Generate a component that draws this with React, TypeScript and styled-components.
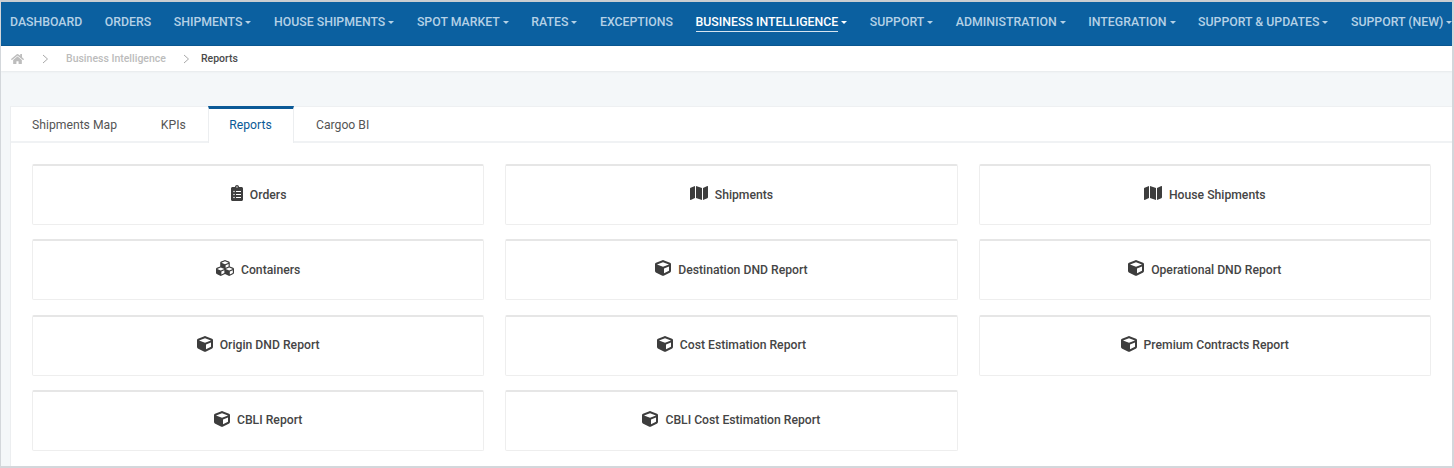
import React from "react";
import styled, { createGlobalStyle } from "styled-components";
import { FaClipboardList, FaMap, FaCubes, FaCube, FaHome } from "react-icons/fa";

const Global = createGlobalStyle`
  html, body { margin: 0; padding: 0; height: 468px; overflow: hidden; background: #f4f7f9; }
  body { font-family: Roboto, "Liberation Sans", sans-serif; }
  * { box-sizing: border-box; }
`;

const Frame = styled.div`
  width: 1454px;
  height: 468px;
  border-top: 2px solid #c9cdd1;
  border-left: 1px solid #d3d7db;
  border-right: 2px solid #d3d7db;
  border-bottom: 2px solid #d3d7db;
  display: flex;
  flex-direction: column;
  overflow: hidden;
  background: #f4f7f9;
`;

const Nav = styled.nav`
  height: 44px;
  background: #0b60a0;
  border-bottom: 1px solid #0a5791;
  display: flex;
  align-items: center;
  padding-left: 9px;
  padding-bottom: 2px;
  gap: 22.6px;
  white-space: nowrap;
  flex: none;
`;

const NavItem = styled.a<{ $active?: boolean }>`
  display: flex;
  align-items: center;
  font-size: 12.3px;
  font-weight: 500;
  color: ${(p) => (p.$active ? "#ffffff" : "#b5d1e6")};
`;

const NavLabel = styled.span<{ $active?: boolean }>`
  padding: 2px 0;
  border-bottom: 1px solid ${(p) => (p.$active ? "#d5e4f0" : "transparent")};
`;

const Caret = styled.i`
  display: inline-block;
  margin-left: 3px;
  margin-bottom: 1px;
  border-top: 3px solid currentColor;
  border-left: 3px solid transparent;
  border-right: 3px solid transparent;
`;

const Crumbs = styled.div`
  height: 25px;
  flex: none;
  background: #ffffff;
  box-shadow: 0 1px 2px rgba(0, 0, 0, 0.06);
  display: flex;
  align-items: center;
  padding-left: 10px;
  font-size: 10.5px;
`;

const HomeIcon = styled(FaHome)`
  width: 13px;
  height: 12px;
  color: #bdbdbd;
`;

const Sep = styled.span<{ $w: number; $pad: number }>`
  width: ${(p) => p.$w}px;
  padding-left: ${(p) => p.$pad}px;
  display: flex;
  justify-content: center;
  color: #a8a8a8;
`;

const CrumbLink = styled.span`
  color: #bcbcbc;
  font-weight: 500;
`;

const CrumbCurrent = styled.span`
  color: #4a4a4a;
  font-weight: 500;
`;

const Main = styled.main`
  flex: 1;
  padding: 35px 0 0 9px;
  display: flex;
  min-height: 0;
`;

const Card = styled.section`
  flex: 1;
  background: #ffffff;
  border-top: 1px solid #eef0f2;
  border-left: 1px solid #eceef0;
  display: flex;
  flex-direction: column;
`;

const Tabs = styled.div`
  display: flex;
  height: 36px;
  flex: none;
  padding-left: 0;
  border-bottom: 2px solid #f0f2f4;
`;

const TabRow = styled.div`
  display: flex;
  margin-left: -0.75px;
`;

const Tab = styled.div<{ $active?: boolean }>`
  height: ${(p) => (p.$active ? "37px" : "34px")};
  padding: ${(p) => (p.$active ? "0 21.5px 2px 20.5px" : "1px 22px 0")};
  margin-top: ${(p) => (p.$active ? "-1px" : "0")};
  margin-left: ${(p) => (p.$active ? "0" : "-0.25px")};
  display: flex;
  align-items: center;
  font-size: 12.2px;
  color: ${(p) => (p.$active ? "#0b5a97" : "#555555")};
  background: ${(p) => (p.$active ? "#ffffff" : "transparent")};
  border-top: ${(p) => (p.$active ? "3px solid #0b5a97" : "0")};
  border-left: ${(p) => (p.$active ? "1px solid #eceef0" : "0")};
  border-right: ${(p) => (p.$active ? "1px solid #eceef0" : "0")};
`;

const Grid = styled.div`
  display: grid;
  grid-template-columns: repeat(3, 452.3px);
  grid-auto-rows: 61px;
  column-gap: 21px;
  row-gap: 14.3px;
  padding: 21px 0 0 21px;
`;

const ReportButton = styled.a`
  display: flex;
  align-items: center;
  justify-content: center;
  gap: 7px;
  padding-bottom: 1px;
  border: 1px solid #eeeeee;
  border-top: 2px solid #e6e6e6;
  border-radius: 2px;
  background: #ffffff;
  color: #454545;
  font-size: 12.2px;
  font-weight: 500;
`;

const IconWrap = styled.span<{ $tight?: boolean }>`
  display: flex;
  color: #3d3d3d;
  margin-top: -3px;
  margin-right: ${(p) => (p.$tight ? "-2px" : "0")};
  margin-left: ${(p) => (p.$tight ? "-1px" : "0")};
  svg { display: block; }
`;

const Chevron = () => (
  <svg width="7" height="10" viewBox="0 0 7 10" fill="none" stroke="currentColor" strokeWidth="1">
    <path d="M1 1l4.5 4L1 9" />
  </svg>
);

const navItems: [string, boolean, boolean][] = [
  ["DASHBOARD", false, false],
  ["ORDERS", false, false],
  ["SHIPMENTS", true, false],
  ["HOUSE SHIPMENTS", true, false],
  ["SPOT MARKET", true, false],
  ["RATES", true, false],
  ["EXCEPTIONS", false, false],
  ["BUSINESS INTELLIGENCE", true, true],
  ["SUPPORT", true, false],
  ["ADMINISTRATION", true, false],
  ["INTEGRATION", true, false],
  ["SUPPORT & UPDATES", true, false],
  ["SUPPORT (NEW)", true, false],
];

const tabs = ["Shipments Map", "KPIs", "Reports", "Cargoo BI"];

const reports: [string, React.ReactNode][] = [
  ["Orders", <FaClipboardList size={16} />],
  ["Shipments", <FaMap size={18} />],
  ["House Shipments", <FaMap size={18} />],
  ["Containers", <FaCubes size={18} />],
  ["Destination DND Report", <FaCube size={16} />],
  ["Operational DND Report", <FaCube size={16} />],
  ["Origin DND Report", <FaCube size={16} />],
  ["Cost Estimation Report", <FaCube size={16} />],
  ["Premium Contracts Report", <FaCube size={16} />],
  ["CBLI Report", <FaCube size={16} />],
  ["CBLI Cost Estimation Report", <FaCube size={16} />],
];

export default function App() {
  return (
    <Frame>
      <Global />
      <Nav>
        {navItems.map(([label, caret, active]) => (
          <NavItem key={label} $active={active}>
            <NavLabel $active={active}>{label}</NavLabel>
            {caret && <Caret />}
          </NavItem>
        ))}
      </Nav>
      <Crumbs>
        <HomeIcon />
        <Sep $w={42} $pad={1}><Chevron /></Sep>
        <CrumbLink>Business Intelligence</CrumbLink>
        <Sep $w={35} $pad={6}><Chevron /></Sep>
        <CrumbCurrent>Reports</CrumbCurrent>
      </Crumbs>
      <Main>
        <Card>
          <Tabs>
            <TabRow>
              {tabs.map((t) => (
                <Tab key={t} $active={t === "Reports"}>
                  {t}
                </Tab>
              ))}
            </TabRow>
          </Tabs>
          <Grid>
            {reports.map(([label, icon]) => (
              <ReportButton key={label}>
                <IconWrap $tight={label === "Orders"}>{icon}</IconWrap>
                {label}
              </ReportButton>
            ))}
          </Grid>
        </Card>
      </Main>
    </Frame>
  );
}
